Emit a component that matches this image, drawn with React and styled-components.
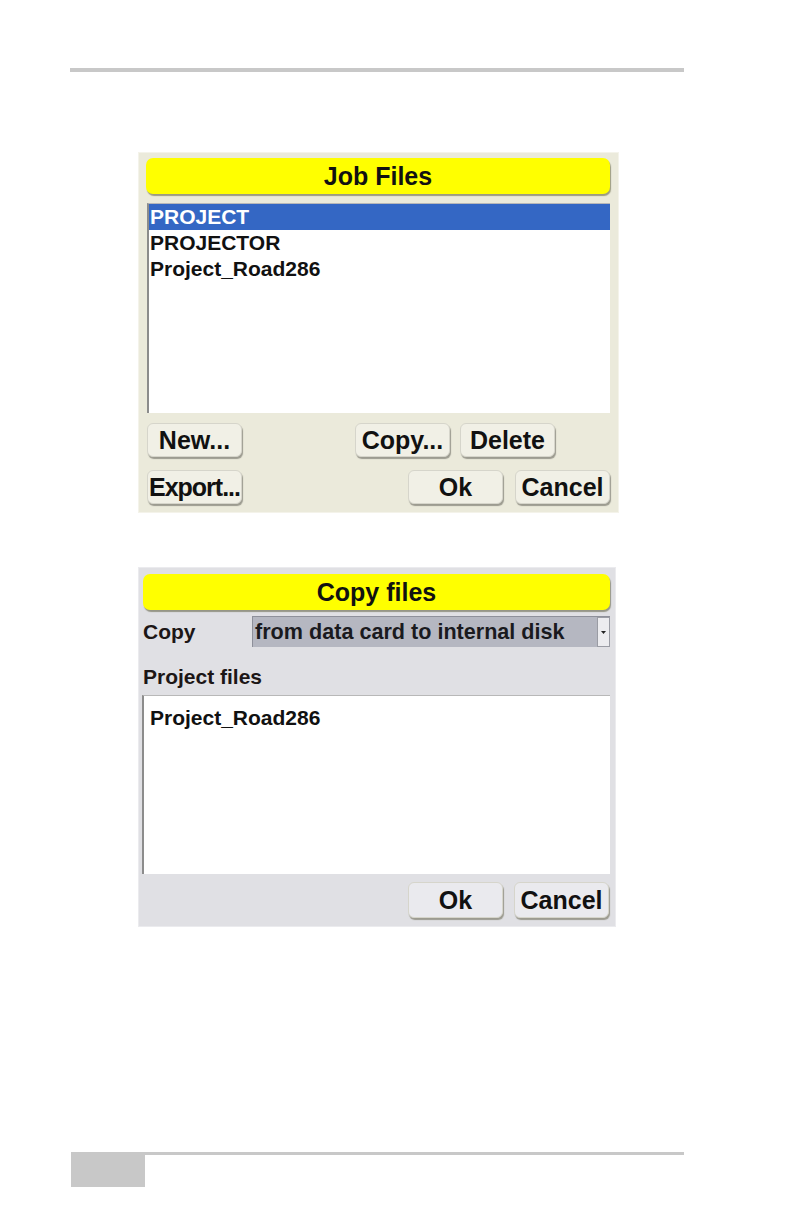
import React from "react";
import styled, { createGlobalStyle } from "styled-components";

const GlobalStyle = createGlobalStyle`
  body {
    margin: 0;
    background: #fff;
    font-family: "Liberation Sans", Arial, sans-serif;
  }
`;

const Page = styled.div`
  width: 792px;
  height: 1224px;
  padding-top: 68px;
  box-sizing: border-box;
`;

const TopRule = styled.div`
  margin-left: 70px;
  width: 614px;
  height: 4px;
  background: #c8c8c8;
`;

const Dialog = styled.div`
  width: ${(p) => p.$width}px;
  margin-left: 138px;
  margin-top: ${(p) => p.$top}px;
  padding: ${(p) => p.$padTop}px ${(p) => p.$padRight}px ${(p) => p.$padBottom}px
    ${(p) => p.$padLeft}px;
  box-sizing: border-box;
  background: ${(p) => p.$bg};
  border: 1px solid ${(p) => p.$edge};
  display: flex;
  flex-direction: column;
`;

const TitleBar = styled.div`
  height: 36px;
  background: #ffff00;
  border-radius: 7px;
  box-shadow: 1px 2px 1px rgba(60, 60, 20, 0.45);
  display: flex;
  align-items: center;
  justify-content: center;
  font-weight: bold;
  font-size: 25px;
  color: #111;
`;

const ListBox = styled.div`
  height: ${(p) => p.$height}px;
  margin-top: ${(p) => p.$top}px;
  margin-left: ${(p) => p.$left}px;
  background: #fff;
  border-left: 2px solid #8c8c8c;
  border-top: 1px solid #b8b8b8;
  box-sizing: border-box;
  padding-top: ${(p) => p.$padTop}px;
`;

const ListRow = styled.div`
  height: 26px;
  display: flex;
  align-items: center;
  padding-left: ${(p) => p.$indent}px;
  font-weight: bold;
  font-size: 21px;
  color: ${(p) => (p.$selected ? "#fff" : "#111")};
  background: ${(p) => (p.$selected ? "#3467c4" : "transparent")};
`;

const ButtonRow = styled.div`
  display: flex;
  margin-top: ${(p) => p.$top}px;
  padding-left: ${(p) => p.$left}px;
  padding-right: ${(p) => p.$right}px;
  gap: ${(p) => p.$gap}px;
`;

const Button = styled.div`
  width: 95px;
  height: ${(p) => p.$h || 34}px;
  box-sizing: border-box;
  margin-left: ${(p) => (p.$push ? "auto" : "0")};
  background: ${(p) => p.$bg};
  border: 1px solid #d6d5cb;
  border-radius: 6px;
  box-shadow: 1px 2px 1px #9c9b90;
  display: flex;
  align-items: center;
  justify-content: center;
  font-weight: bold;
  font-size: 25px;
  letter-spacing: ${(p) => (p.$tight ? "-1px" : "0")};
  color: #111;
  white-space: nowrap;
`;

const FieldRow = styled.div`
  display: flex;
  align-items: center;
  margin-top: ${(p) => p.$top}px;
  height: ${(p) => p.$height}px;
`;

const Label = styled.div`
  width: ${(p) => (p.$auto ? "auto" : "109px")};
  font-weight: bold;
  font-size: 21px;
  color: #1c1616;
`;

const Select = styled.div`
  flex: 1;
  height: 31px;
  display: flex;
  background: #b5b7c1;
  border-top: 1px solid #8e909a;
  border-left: 1px solid #8e909a;
  box-sizing: border-box;
`;

const SelectText = styled.div`
  flex: 1;
  display: flex;
  align-items: center;
  padding-left: 2px;
  font-weight: bold;
  font-size: 21.6px;
  color: #1a1a1e;
  white-space: nowrap;
`;

const SelectArrow = styled.div`
  width: 13px;
  background: #ececef;
  border: 1px solid #9a9ca4;
  box-sizing: border-box;
  display: flex;
  align-items: center;
  justify-content: center;
`;

const Footer = styled.div`
  margin-left: 71px;
  margin-top: 225px;
  width: 613px;
  border-top: 3px solid #c8c8c8;
`;

const PageTab = styled.div`
  width: 74px;
  height: 32px;
  background: #c8c8c8;
`;

const JobFiles = () => (
  <Dialog
    $width={481}
    $top={80}
    $padTop={5}
    $padBottom={8}
    $padLeft={7}
    $padRight={8}
    $bg="#ebeadb"
    $edge="#f4f3ea"
  >
    <TitleBar>Job Files</TitleBar>
    <ListBox $height={210} $top={9} $left={1} $padTop={0}>
      <ListRow $selected $indent={1}>PROJECT</ListRow>
      <ListRow $indent={1}>PROJECTOR</ListRow>
      <ListRow $indent={1}>Project_Road286</ListRow>
    </ListBox>
    <ButtonRow $top={10} $left={1} $right={55} $gap={10}>
      <Button $bg="#f1f0e6">New...</Button>
      <Button $bg="#f1f0e6" $push>Copy...</Button>
      <Button $bg="#f1f0e6">Delete</Button>
    </ButtonRow>
    <ButtonRow $top={13} $left={1} $right={0} $gap={12}>
      <Button $bg="#f1f0e6" $tight>Export...</Button>
      <Button $bg="#f1f0e6" $push>Ok</Button>
      <Button $bg="#f1f0e6">Cancel</Button>
    </ButtonRow>
  </Dialog>
);

const CopyFiles = () => (
  <Dialog
    $width={478}
    $top={54}
    $padTop={6}
    $padBottom={8}
    $padLeft={4}
    $padRight={5}
    $bg="#e0e0e4"
    $edge="#ebebee"
  >
    <TitleBar>Copy files</TitleBar>
    <FieldRow $top={6} $height={31}>
      <Label>Copy</Label>
      <Select>
        <SelectText>from data card to internal disk</SelectText>
        <SelectArrow>
          <svg width="5" height="3" viewBox="0 0 5 3">
            <path d="M0 0 H5 L2.5 3 Z" fill="#222" />
          </svg>
        </SelectArrow>
      </Select>
    </FieldRow>
    <FieldRow $top={15} $height={30}>
      <Label $auto>Project files</Label>
    </FieldRow>
    <ListBox $height={179} $top={3} $left={-1} $padTop={9}>
      <ListRow $indent={6}>Project_Road286</ListRow>
    </ListBox>
    <ButtonRow $top={8} $left={0} $right={1} $gap={11}>
      <Button $bg="#eaeaee" $h={36} $push>Ok</Button>
      <Button $bg="#eaeaee" $h={36}>Cancel</Button>
    </ButtonRow>
  </Dialog>
);

const App = () => (
  <Page>
    <GlobalStyle />
    <TopRule />
    <JobFiles />
    <CopyFiles />
    <Footer>
      <PageTab />
    </Footer>
  </Page>
);

export default App;
